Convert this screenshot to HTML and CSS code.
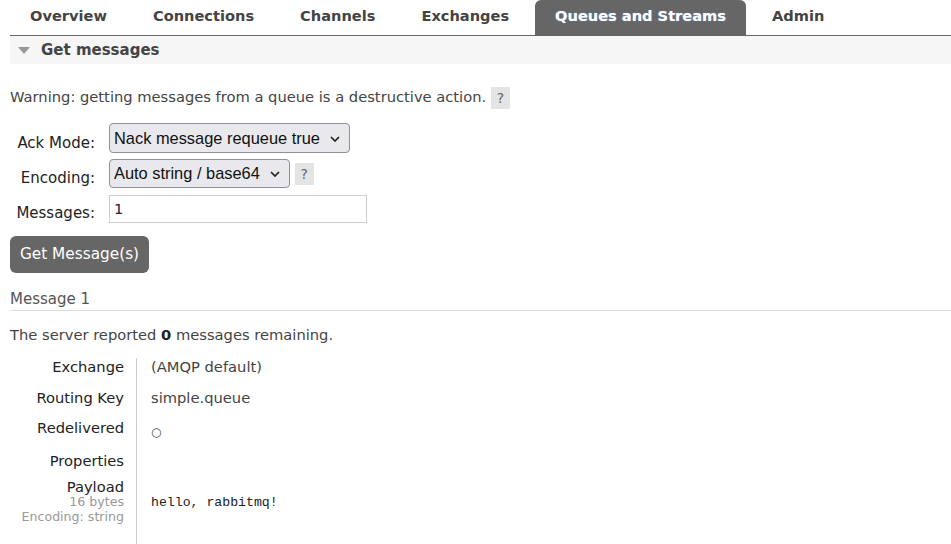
FILE: index.html
```html
<!DOCTYPE html>
<html>
<head>
<meta charset="utf-8">
<link rel="stylesheet" href="styles.css">
</head>
<body>
<div class="page">
  <ul class="tabs">
    <li class="tab">Overview</li>
    <li class="tab">Connections</li>
    <li class="tab">Channels</li>
    <li class="tab">Exchanges</li>
    <li class="tab active">Queues and Streams</li>
    <li class="tab">Admin</li>
  </ul>
  <div class="section-head"><span class="tri"></span><span>Get messages</span></div>
  <p class="warning">Warning: getting messages from a queue is a destructive action. <span class="help">?</span></p>
  <div class="form">
    <label class="lbl">Ack Mode:</label>
    <div class="ctl"><div class="select s1">Nack message requeue true<svg class="chev" width="10" height="6" viewBox="0 0 10 6"><polyline points="1,1 5,5 9,1" fill="none" stroke="#222" stroke-width="1.7"/></svg></div></div>
    <label class="lbl">Encoding:</label>
    <div class="ctl"><div class="select s2">Auto string / base64<svg class="chev" width="10" height="6" viewBox="0 0 10 6"><polyline points="1,1 5,5 9,1" fill="none" stroke="#222" stroke-width="1.7"/></svg></div><span class="help">?</span></div>
    <label class="lbl">Messages:</label>
    <div class="ctl"><div class="input">1</div></div>
  </div>
  <div class="btn">Get Message(s)</div>
  <div class="msg-title">Message 1</div>
  <p class="remaining">The server reported <b>0</b> messages remaining.</p>
  <div class="facts">
    <div class="k">Exchange</div><div class="v">(AMQP default)</div>
    <div class="k">Routing Key</div><div class="v">simple.queue</div>
    <div class="k">Redelivered</div><div class="v"><span class="circ">○</span></div>
    <div class="k">Properties</div><div class="v"></div>
    <div class="k payload"><span>Payload</span><small>16 bytes</small><small>Encoding: string</small></div><div class="v pv"><pre>hello, rabbitmq!</pre></div>
  </div>
</div>
</body>
</html>
```

FILE: styles.css
```css
* { box-sizing: border-box; }
html, body { margin: 0; padding: 0; background: #fff; }
body { font-family: "DejaVu Sans", Verdana, sans-serif; font-size: 14.7px; color: #333; }
.page { padding-left: 10px; }
.tabs {
  list-style: none; margin: 0; padding: 0;
  display: flex; gap: 6px;
  border-bottom: 1px solid #666;
  height: 36px;
}
.tab {
  padding: 0 20px; height: 35px; line-height: 32px;
  font-weight: bold; font-size: 14.6px; color: #444;
}
.tab.active {
  background: #666; color: #fff; border-radius: 6px 6px 0 0;
  text-shadow: 0 0 1px #8bf;
}
.section-head {
  background: #f6f6f6; height: 28px;
  display: flex; align-items: center;
  font-weight: bold; font-size: 15px; color: #444;
  padding-left: 8px;
}
.tri {
  width: 0; height: 0; border-left: 6px solid transparent; border-right: 6px solid transparent;
  border-top: 7px solid #999; margin-right: 11px; margin-top: 1px;
}
.warning { margin: 21px 0 0; line-height: 24px; color: #444; }
.help {
  display: inline-block; background: #e4e4e4; color: #666; font-size: 14px;
  width: 19px; height: 22px; line-height: 22px; text-align: center; vertical-align: middle;
}
.form {
  display: grid; grid-template-columns: 85px auto;
  grid-template-rows: 30px 29px 28px;
  column-gap: 14px; row-gap: 6px; margin-top: 14px; justify-content: start;
  align-items: center;
}
.form > .ctl:nth-child(6) { margin-top: 2px; }
.lbl { text-align: right; font-size: 15px; color: #222; padding-top: 9px; line-height: 18px; }
.ctl { display: flex; align-items: center; gap: 5px; height: 100%; }
.select {
  font-family: "Liberation Sans", Arial, sans-serif; font-size: 16.4px; color: #111;
  background: #e9e9ed; border: 1px solid #8f8f9d; border-radius: 4px;
  height: 100%; padding: 0 9px 0 4px;
  display: flex; align-items: center; white-space: pre;
}
.chev { margin-left: 10px; margin-top: 1px; }
.input {
  width: 258px; height: 28px; border: 1px solid #ccc;
  padding: 4px 4px; font-size: 14.7px; line-height: 18px; color: #223;
}
.btn {
  display: inline-block; margin-top: 14px;
  background: #666; color: #fff; border-radius: 6px;
  padding: 0 10px; height: 37px; line-height: 37px; font-size: 15.3px;
}
.msg-title {
  margin-top: 17px; color: #555; font-size: 15px;
  border-bottom: 1px solid #ddd; padding-bottom: 2px; line-height: 18px;
}
.remaining { margin: 14px 0 0; color: #444; line-height: 20px; }
.remaining b { color: #222; }
.facts {
  display: grid; grid-template-columns: 127px auto;
  grid-template-rows: 31px 30px 33px 27px auto;
  margin-top: 13px; color: #222;
}
.k { text-align: right; padding: 0 12px 0 0; border-right: 1px solid #ccc; line-height: 18px; }
.v { padding: 0 14px; line-height: 18px; color: #444; }
.k.payload { display: flex; flex-direction: column; align-items: flex-end; padding-bottom: 30px; }
.k.payload span { line-height: 16px; }
.k small { font-size: 12.6px; color: #999; line-height: 14.5px; }
.circ { font-size: 12px; position: relative; top: 3px; }
.pv { padding-top: 15px; }
pre { margin: 0; font-family: "Liberation Mono", monospace; font-size: 13.2px; line-height: 18px; color: #222; }
```
